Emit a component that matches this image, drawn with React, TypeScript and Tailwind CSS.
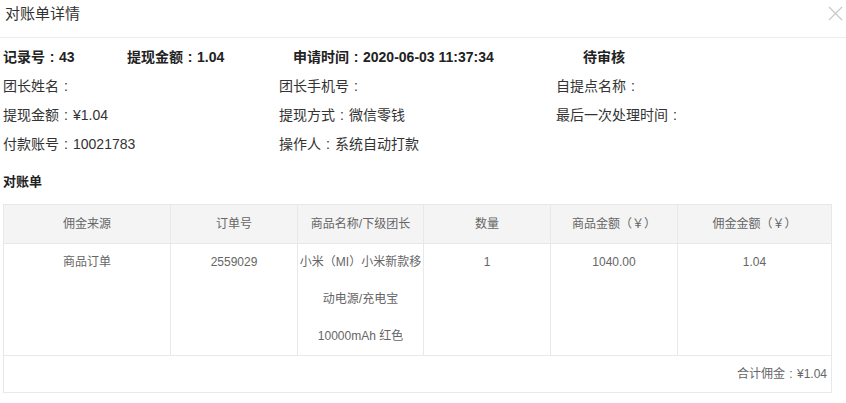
import React from 'react';

type Row = {
  source: string;
  orderNo: string;
  product: string[];
  qty: number;
  amount: string;
  commission: string;
};

const rows: Row[] = [
  {
    source: '商品订单',
    orderNo: '2559029',
    product: ['小米（MI）小米新款移', '动电源/充电宝', '10000mAh 红色'],
    qty: 1,
    amount: '1040.00',
    commission: '1.04',
  },
];

const headers = ['佣金来源', '订单号', '商品名称/下级团长', '数量', '商品金额（￥）', '佣金金额（￥）'];
const colWidths = ['w-[167px]', 'w-[127px]', 'w-[126px]', 'w-[127px]', 'w-[127px]', 'w-[154px]'];

// full-width colon drawn centred in its em box, like the original UI font
const Label: React.FC<{ text: string }> = ({ text }) => {
  const parts = text.split('：');
  return (
    <>
      {parts.map((p, i) => (
        <React.Fragment key={i}>
          {i > 0 && <span className="inline-block w-[1em] text-center">:</span>}
          {p}
        </React.Fragment>
      ))}
    </>
  );
};

const CloseIcon: React.FC = () => (
  <svg width="15" height="15" viewBox="0 0 15 15" fill="none" stroke="#c8c8c8" strokeWidth="1.2">
    <path d="M1 1 L14 14 M14 1 L1 14" />
  </svg>
);

const App: React.FC = () => {
  return (
    <div
      className="w-[846px] h-[403px] bg-white text-[#333] overflow-hidden"
      style={{ fontFamily: '"Liberation Sans", "Noto Sans CJK SC", sans-serif' }}
    >
      <div className="h-[38px] flex justify-between border-b border-[#ececec]">
        <div className="pl-[5px] text-[15px] leading-[28px]">对账单详情</div>
        <div className="pt-[6px] pr-[3px]">
          <CloseIcon />
        </div>
      </div>

      <div className="px-[3px] pt-[5px] text-[14px] leading-[29px]">
        <div className="flex font-semibold text-[#222]">
          <span className="w-[124px]"><Label text="记录号：43" /></span>
          <span className="w-[166px]"><Label text="提现金额：1.04" /></span>
          <span className="w-[290px]"><Label text="申请时间：2020-06-03 11:37:34" /></span>
          <span>待审核</span>
        </div>
        <div className="grid grid-cols-[276px_277px_1fr] text-[#333]">
          <span><Label text="团长姓名：" /></span>
          <span><Label text="团长手机号：" /></span>
          <span><Label text="自提点名称：" /></span>
          <span><Label text="提现金额：¥1.04" /></span>
          <span><Label text="提现方式：微信零钱" /></span>
          <span><Label text="最后一次处理时间：" /></span>
          <span><Label text="付款账号：10021783" /></span>
          <span><Label text="操作人：系统自动打款" /></span>
          <span></span>
        </div>
        <div className="mt-[8px] text-[13px] font-semibold text-[#222]">对账单</div>

        <table className="mt-[8px] w-[828px] border-collapse table-fixed text-[12px] text-[#666]">
          <thead>
            <tr className="bg-[#f4f4f4]">
              {headers.map((h, i) => (
                <th
                  key={h}
                  className={`${colWidths[i]} h-[39px] border border-[#e6e8eb] font-normal text-center`}
                >
                  {h}
                </th>
              ))}
            </tr>
          </thead>
          <tbody>
            {rows.map((r) => (
              <tr key={r.orderNo} className="align-top text-center leading-[37px]">
                <td className="border border-[#e6e8eb]">{r.source}</td>
                <td className="border border-[#e6e8eb]">{r.orderNo}</td>
                <td className="border border-[#e6e8eb] whitespace-nowrap">
                  {r.product.map((line) => (
                    <div key={line}>{line}</div>
                  ))}
                </td>
                <td className="border border-[#e6e8eb]">{r.qty}</td>
                <td className="border border-[#e6e8eb]">{r.amount}</td>
                <td className="border border-[#e6e8eb]">{r.commission}</td>
              </tr>
            ))}
            <tr>
              <td colSpan={6} className="h-[37px] border border-[#e6e8eb] text-right pr-[4px]">
                <Label text="合计佣金：¥1.04" />
              </td>
            </tr>
          </tbody>
        </table>
      </div>
    </div>
  );
};

export default App;
